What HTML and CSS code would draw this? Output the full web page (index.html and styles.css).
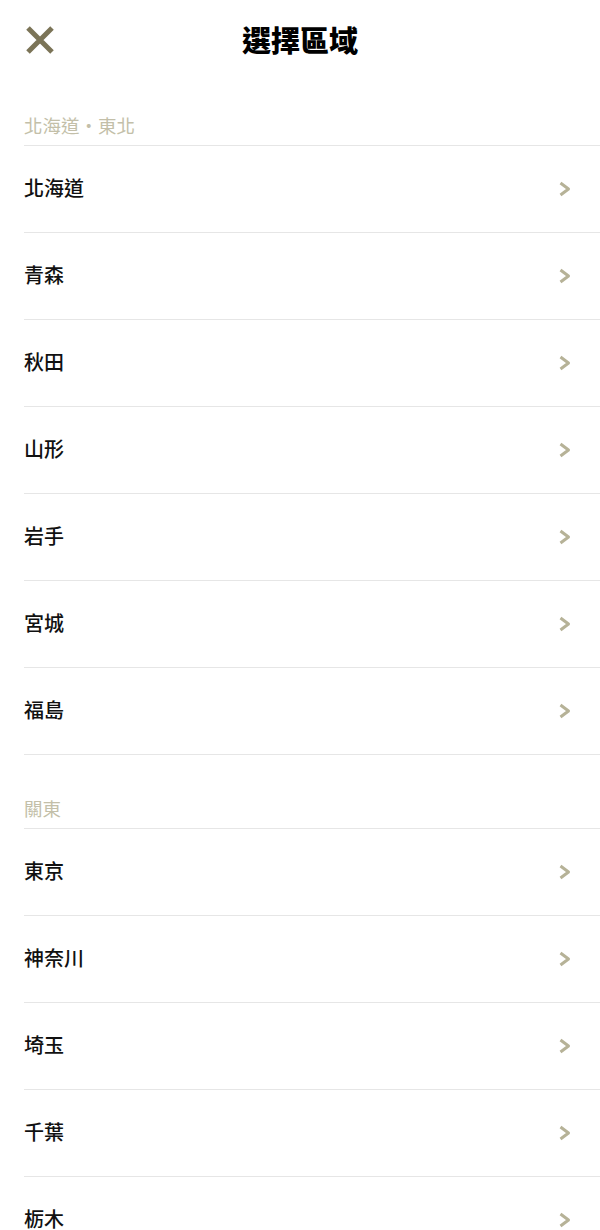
FILE: index.html
```html
<!DOCTYPE html>
<html lang="zh-Hant">
<head>
<meta charset="utf-8">
<title>選擇區域</title>
<link rel="stylesheet" href="styles.css">
</head>
<body>
<header class="topbar">
  <button class="close" aria-label="關閉">
    <svg width="32" height="32" viewBox="0 0 32 32"><path d="M4 4 L28 28 M28 4 L4 28" stroke="#7b7457" stroke-width="5" stroke-linecap="butt" fill="none"/></svg>
  </button>
  <h1 class="title">選擇區域</h1>
  <span class="spacer"></span>
</header>

<section class="group">
  <div class="group-label">北海道・東北</div>
  <ul class="list">
    <li class="row"><span class="name">北海道</span><svg class="chev" width="14" height="16" viewBox="0 0 14 16"><path d="M2.5 2 L10.5 8 L2.5 14" stroke="#b6b297" stroke-width="3" stroke-linejoin="round" fill="none"/></svg></li>
    <li class="row"><span class="name">青森</span><svg class="chev" width="14" height="16" viewBox="0 0 14 16"><path d="M2.5 2 L10.5 8 L2.5 14" stroke="#b6b297" stroke-width="3" stroke-linejoin="round" fill="none"/></svg></li>
    <li class="row"><span class="name">秋田</span><svg class="chev" width="14" height="16" viewBox="0 0 14 16"><path d="M2.5 2 L10.5 8 L2.5 14" stroke="#b6b297" stroke-width="3" stroke-linejoin="round" fill="none"/></svg></li>
    <li class="row"><span class="name">山形</span><svg class="chev" width="14" height="16" viewBox="0 0 14 16"><path d="M2.5 2 L10.5 8 L2.5 14" stroke="#b6b297" stroke-width="3" stroke-linejoin="round" fill="none"/></svg></li>
    <li class="row"><span class="name">岩手</span><svg class="chev" width="14" height="16" viewBox="0 0 14 16"><path d="M2.5 2 L10.5 8 L2.5 14" stroke="#b6b297" stroke-width="3" stroke-linejoin="round" fill="none"/></svg></li>
    <li class="row"><span class="name">宮城</span><svg class="chev" width="14" height="16" viewBox="0 0 14 16"><path d="M2.5 2 L10.5 8 L2.5 14" stroke="#b6b297" stroke-width="3" stroke-linejoin="round" fill="none"/></svg></li>
    <li class="row"><span class="name">福島</span><svg class="chev" width="14" height="16" viewBox="0 0 14 16"><path d="M2.5 2 L10.5 8 L2.5 14" stroke="#b6b297" stroke-width="3" stroke-linejoin="round" fill="none"/></svg></li>
  </ul>
</section>

<section class="group">
  <div class="group-label">關東</div>
  <ul class="list">
    <li class="row"><span class="name">東京</span><svg class="chev" width="14" height="16" viewBox="0 0 14 16"><path d="M2.5 2 L10.5 8 L2.5 14" stroke="#b6b297" stroke-width="3" stroke-linejoin="round" fill="none"/></svg></li>
    <li class="row"><span class="name">神奈川</span><svg class="chev" width="14" height="16" viewBox="0 0 14 16"><path d="M2.5 2 L10.5 8 L2.5 14" stroke="#b6b297" stroke-width="3" stroke-linejoin="round" fill="none"/></svg></li>
    <li class="row"><span class="name">埼玉</span><svg class="chev" width="14" height="16" viewBox="0 0 14 16"><path d="M2.5 2 L10.5 8 L2.5 14" stroke="#b6b297" stroke-width="3" stroke-linejoin="round" fill="none"/></svg></li>
    <li class="row"><span class="name">千葉</span><svg class="chev" width="14" height="16" viewBox="0 0 14 16"><path d="M2.5 2 L10.5 8 L2.5 14" stroke="#b6b297" stroke-width="3" stroke-linejoin="round" fill="none"/></svg></li>
    <li class="row"><span class="name">栃木</span><svg class="chev" width="14" height="16" viewBox="0 0 14 16"><path d="M2.5 2 L10.5 8 L2.5 14" stroke="#b6b297" stroke-width="3" stroke-linejoin="round" fill="none"/></svg></li>
  </ul>
</section>
</body>
</html>
```
FILE: styles.css
```css
html, body {
  margin: 0;
  padding: 0;
  background: #ffffff;
}
body {
  font-family: "Noto Sans CJK TC", "Noto Sans CJK JP", "Noto Sans", sans-serif;
  color: #111111;
  overflow: hidden;
}
.topbar {
  display: grid;
  grid-template-columns: 1fr auto 1fr;
  align-items: center;
  height: 48px;
  padding: 16px 0 8px;
}
.close {
  justify-self: start;
  margin-left: 24px;
  width: 32px;
  height: 32px;
  padding: 0;
  border: 0;
  background: none;
  display: block;
}
.close svg { display: block; }
.title {
  margin: 0 0 2px;
  font-size: 29px;
  font-weight: 900;
  line-height: 40px;
  color: #000000;
}
.group-label {
  height: 65px;
  margin-left: 24px;
  padding-bottom: 8px;
  display: flex;
  align-items: flex-end;
  font-size: 18.5px;
  line-height: 24px;
  color: #c3bfa9;
  border-bottom: 1px solid #e6e6e6;
}
.list {
  list-style: none;
  margin: 0;
  padding: 0;
}
.row {
  display: flex;
  align-items: center;
  justify-content: space-between;
  height: 86px;
  margin-left: 24px;
  padding-right: 28px;
  border-bottom: 1px solid #e6e6e6;
  font-size: 20px;
  font-weight: 500;
  color: #111111;
}
.name {
  margin-bottom: 2px;
  line-height: 28px;
}
.chev { display: block; flex: none; margin-bottom: 1px; }
```
